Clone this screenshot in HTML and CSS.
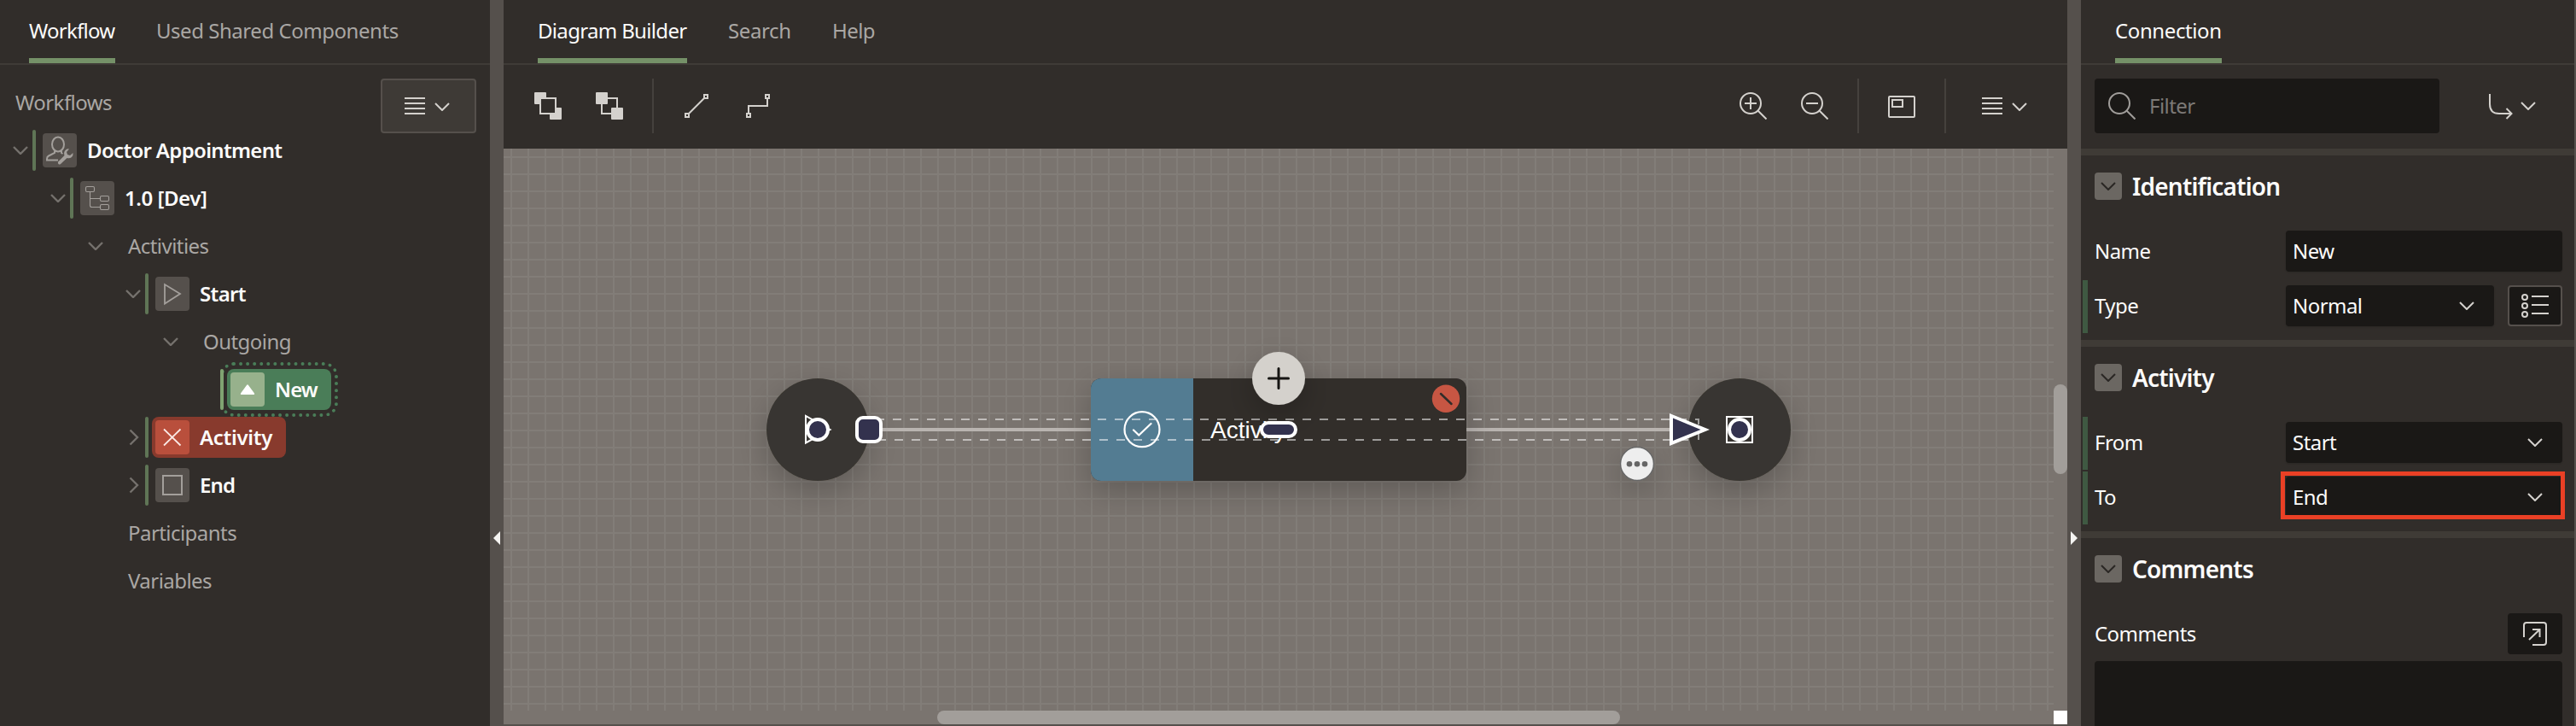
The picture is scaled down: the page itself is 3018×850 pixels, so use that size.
FILE: index.html
```html
<!DOCTYPE html>
<html lang="en">
<head>
<meta charset="utf-8">
<title>Workflow Designer</title>
<link rel="stylesheet" href="styles.css">
</head>
<body>
<svg class="sprite" aria-hidden="true">
  <symbol id="chev" viewBox="0 0 18 10"><path d="M1 1l8 8 8-8"/></symbol>
  <symbol id="chev-r" viewBox="0 0 12 20"><path d="M1.5 1.5l8.500 8.500-8.500 8.500"/></symbol>
  <symbol id="lines" viewBox="0 0 24 20"><path d="M0 1h24M0 7h24M0 13h24M0 19h24"/></symbol>
  <symbol id="mag" viewBox="0 0 32 32"><circle cx="13" cy="13" r="12"/><path d="M21.500 21.500L31.500 31.500"/></symbol>
</svg>
<div class="app">
  <aside class="panel left">
    <nav class="tabs">
      <span class="tab active t-workflow">Workflow</span>
      <span class="tab t-shared">Used Shared Components</span>
    </nav>
    <div class="tree-head">
      <span class="tree-title">Workflows</span>
      <button class="menu-btn"><svg class="ic i-lines"><use href="#lines"/></svg><svg class="ic i-chev"><use href="#chev"/></svg></button>
    </div>
    <ul class="tree">
      <li class="node l0"><span class="tw"><svg class="ic i-chev"><use href="#chev"/></svg></span><i class="bar"></i>
        <span class="pill"><span class="box"><svg class="ic" width="40" height="40" viewBox="0 0 40 40"><g stroke-width="2"><ellipse cx="18" cy="13" rx="7" ry="8.500"/><path d="M14 20.500v2.500l-7 3.500q-2 1-2 3.500v1.500h13M22 20.500v2.500l1.500 1"/></g><path class="solid" d="M18 33.500l7.500-7.500q-1.500-4.500 2-7 1.500-1 3.500-.5l-3 3.500 1 3 3 1 3.500-3q.5 3-1.500 5-2.500 2-5.500 1l-7.500 7q-1.500 1-2.500 0t-.5-2.500z"/></svg></span><b class="name n-doctor">Doctor Appointment</b></span></li>
      <li class="node l1"><span class="tw"><svg class="ic i-chev"><use href="#chev"/></svg></span><i class="bar"></i>
        <span class="pill"><span class="box"><svg class="ic" width="40" height="40" viewBox="0 0 40 40"><g stroke-width="1.100"><rect x="6.500" y="6.500" width="10" height="6" rx="1.500"/><rect x="23.500" y="17.500" width="10" height="6" rx="1.500"/><rect x="23.500" y="27.500" width="10" height="6" rx="1.500"/><path d="M11.500 12.500v16q0 2 2 2h10M11.500 20.500h12"/></g></svg></span><b class="name n-version">1.0 [Dev]</b></span></li>
      <li class="node l2"><span class="tw"><svg class="ic i-chev"><use href="#chev"/></svg></span><span class="group">Activities</span></li>
      <li class="node l3"><span class="tw"><svg class="ic i-chev"><use href="#chev"/></svg></span><i class="bar"></i>
        <span class="pill"><span class="box"><svg class="ic" width="40" height="40" viewBox="0 0 40 40"><path stroke-width="1.800" d="M11 9v22.500L29 20z"/></svg></span><b class="name n-start">Start</b></span></li>
      <li class="node l4"><span class="tw"><svg class="ic i-chev"><use href="#chev"/></svg></span><span class="group">Outgoing</span></li>
      <li class="node l5 selected"><span class="tw"></span><i class="bar"></i>
        <span class="pill"><span class="box"><svg class="ic" width="40" height="40" viewBox="0 0 40 40"><path class="solid" d="M19 15q1-1.500 2 0l7 9.500q.8 1.500-1 1.500H13q-1.800 0-1-1.500z"/></svg></span><b class="name">New</b></span></li>
      <li class="node l3 error"><span class="tw"><svg class="ic i-chev-r"><use href="#chev-r"/></svg></span><i class="bar"></i>
        <span class="pill"><span class="box"><svg class="ic" width="40" height="40" viewBox="0 0 40 40"><path stroke-width="1.800" d="M10 10.500l19.500 19M29.500 10.500L10 29.500"/></svg></span><b class="name n-activity">Activity</b></span></li>
      <li class="node l3"><span class="tw"><svg class="ic i-chev-r"><use href="#chev-r"/></svg></span><i class="bar"></i>
        <span class="pill"><span class="box"><svg class="ic" width="40" height="40" viewBox="0 0 40 40"><rect x="9" y="9" width="22" height="22" stroke-width="2"/></svg></span><b class="name">End</b></span></li>
      <li class="node l2"><span class="tw"></span><span class="group">Participants</span></li>
      <li class="node l2"><span class="tw"></span><span class="group">Variables</span></li>
    </ul>
  </aside>
  <div class="splitter"><svg width="8" height="16" viewBox="0 0 8 16"><path d="M8 0v16L0 8z"/></svg></div>

  <main class="center">
    <nav class="tabs">
      <span class="tab active t-builder">Diagram Builder</span>
      <span class="tab t-search">Search</span>
      <span class="tab t-help">Help</span>
    </nav>
    <div class="toolbar">
      <svg class="ic tool-front" width="32" height="32" viewBox="0 0 32 32"><path class="solid" d="M1 0h12q1 0 1 1v5H6v8H1q-1 0-1-1V1q0-1 1-1zM26 18h5q1 0 1 1v12q0 1-1 1H19q-1 0-1-1v-5h8z"/><rect x="7" y="7" width="18" height="18"/></svg>
      <svg class="ic tool-back" width="32" height="32" viewBox="0 0 32 32"><rect x="7" y="7" width="18" height="18"/><rect class="solid" width="14" height="14" rx="1"/><rect class="solid" x="18" y="18" width="14" height="14" rx="1"/></svg>
      <i class="rule"></i>
      <svg class="ic tool-line" width="28" height="28" viewBox="0 0 28 28"><rect x="1" y="23" width="4" height="4"/><rect x="23" y="1" width="4" height="4"/><path d="M4.500 23.500l19-19"/></svg>
      <svg class="ic tool-elbow" width="28" height="28" viewBox="0 0 28 28"><rect x="1" y="23" width="4" height="4"/><rect x="23" y="1" width="4" height="4"/><path d="M3 23V14h22V5"/></svg>
      <span class="grow"></span>
      <svg class="ic tool-zin" width="32" height="32" viewBox="0 0 32 32"><circle cx="13" cy="13" r="12"/><path d="M21.500 21.500l10 10M6 13h14M13 6v14"/></svg>
      <svg class="ic tool-zout" width="32" height="32" viewBox="0 0 32 32"><circle cx="13" cy="13" r="12"/><path d="M21.500 21.500l10 10M6 13h14"/></svg>
      <i class="rule"></i>
      <svg class="ic tool-over" width="32" height="26" viewBox="0 0 32 26"><rect x="1" y="1" width="30" height="24" rx="1"/><rect x="5" y="5" width="12" height="8"/></svg>
      <i class="rule"></i>
      <span class="tool-menu"><svg class="ic i-lines"><use href="#lines"/></svg><svg class="ic i-chev"><use href="#chev"/></svg></span>
    </div>
    <div class="canvas">
      <svg class="stage" width="1832" height="674" viewBox="590 174 1832 674">
        <defs>
          <pattern id="grid" x="598" y="183" width="20" height="20" patternUnits="userSpaceOnUse"><path class="grid-line" d="M0 0h20v2H2v18H0z"/></pattern>
          <filter id="shadow" x="-60%" y="-60%" width="220%" height="220%"><feDropShadow dx="0" dy="12" stdDeviation="18" flood-color="#000" flood-opacity=".22"/></filter>
          <filter id="shadow-wide" x="-20%" y="-60%" width="140%" height="220%"><feDropShadow dx="0" dy="12" stdDeviation="18" flood-color="#000" flood-opacity=".22"/></filter>
        </defs>
        <rect x="590" y="174" width="1816" height="658" fill="url(#grid)"/>
        <path class="wire" d="M1030 503H1960"/>
        <circle class="terminal" cx="958" cy="503" r="60" filter="url(#shadow)"/>
        <path class="outline" d="M944 487v31.500L972.500 503z"/>
        <circle class="terminal" cx="2038" cy="503" r="60" filter="url(#shadow)"/>
        <rect class="outline" x="2023" y="488" width="30" height="30"/>
        <g filter="url(#shadow-wide)">
          <rect class="card" x="1278" y="443" width="440" height="120" rx="12"/>
          <path class="card-side" d="M1290 443h108v120h-108a12 12 0 0 1-12-12v-96a12 12 0 0 1 12-12z"/>
        </g>
        <circle class="check" cx="1338" cy="502.700" r="20.500"/>
        <path class="check" d="M1328 503.500l6.300 6L1348.500 496" stroke-linecap="round"/>
        <text class="card-text" x="1418" y="513">Activity</text>
        <path class="dash" d="M1026 491H1990V515"/>
        <path class="dash" d="M1028 515H1984"/>
        <circle class="badge" cx="1694" cy="466.700" r="16.200"/>
        <path class="badge-line" d="M1688 461l12.500 12"/>
        <circle class="add" cx="1498" cy="443" r="31" filter="url(#shadow)"/>
        <path class="add-line" d="M1486.500 443h23M1498 431.500v23"/>
        <rect class="handle" x="1478" y="495" width="40" height="16" rx="8"/>
        <circle class="handle" cx="958" cy="503" r="12"/>
        <rect class="handle" x="1004" y="489" width="28" height="28" rx="7"/>
        <path class="arrow-out" d="M1956 484v38L2003 503z"/>
        <path class="arrow-in" d="M1960 489.500v26.500L1992.500 503z"/>
        <circle class="handle" cx="2038" cy="503" r="12"/>
        <circle class="more" cx="1918" cy="543" r="19.500" filter="url(#shadow)"/>
        <g class="more-dots"><circle cx="1909" cy="543.300" r="3.300"/><circle cx="1918" cy="543.300" r="3.300"/><circle cx="1927" cy="543.300" r="3.300"/></g>
      </svg>
      <i class="vthumb"></i><i class="hthumb"></i><i class="corner"></i>
    </div>
  </main>
  <div class="splitter"><svg width="8" height="16" viewBox="0 0 8 16"><path d="M0 0v16L8 8z"/></svg></div>

  <aside class="panel right">
    <nav class="tabs"><span class="tab active t-conn">Connection</span></nav>
    <div class="filter-row">
      <div class="filter"><svg class="ic" width="32" height="32"><use href="#mag"/></svg><span>Filter</span></div>
      <svg class="ic goto" width="28" height="30" viewBox="0 0 28 30"><path d="M1 0v12q0 11 11 11h15M20.500 17l6 6-6 6"/></svg>
      <svg class="ic i-chev"><use href="#chev"/></svg>
    </div>
    <section class="group-box">
      <h2><span class="toggle"><svg class="ic i-chev"><use href="#chev"/></svg></span>Identification</h2>
      <div class="field"><label>Name</label><div class="input"><span>New</span></div></div>
      <div class="field changed"><label>Type</label><div class="input select"><span>Normal</span><svg class="ic i-chev"><use href="#chev"/></svg></div>
        <button class="side-btn framed"><svg class="ic" width="32" height="28" viewBox="0 0 32 28"><circle cx="4" cy="4" r="3"/><circle cx="4" cy="14" r="3"/><circle cx="4" cy="24" r="3"/><path d="M12 3h20M12 13h20M12 23h20"/></svg></button></div>
    </section>
    <section class="group-box">
      <h2><span class="toggle"><svg class="ic i-chev"><use href="#chev"/></svg></span>Activity</h2>
      <div class="field changed"><label>From</label><div class="input select"><span>Start</span><svg class="ic i-chev"><use href="#chev"/></svg></div></div>
      <div class="field changed"><label>To</label><div class="input select marked"><span>End</span><svg class="ic i-chev"><use href="#chev"/></svg></div></div>
    </section>
    <section class="group-box last">
      <h2><span class="toggle"><svg class="ic i-chev"><use href="#chev"/></svg></span>Comments</h2>
      <div class="field"><label class="wide">Comments</label>
        <button class="side-btn"><svg class="ic" width="28" height="28" viewBox="0 0 28 28"><path d="M1 18V4q0-3 3-3h20q3 0 3 3v20q0 3-3 3H11M7 21L19.500 9M11 9h8.500v9"/></svg></button></div>
      <div class="textarea"></div>
    </section>
  </aside>
</div>
</body>
</html>
```
FILE: styles.css
```css
* { box-sizing: border-box; }
body { margin: 0; background: #312d2a; }
.sprite { position: absolute; width: 0; height: 0; }
.app {
  display: flex; width: 3018px; height: 850px; overflow: hidden;
  font-family: "Noto Sans", "Open Sans", sans-serif; font-size: 24px; letter-spacing: -.55px; color: #fcfbfa;
}
.ic { flex: none; display: block; fill: none; stroke: #d4d1cd; stroke-width: 2; }
.ic .solid { fill: #d4d1cd; stroke: none; }
.i-chev { width: 18px; height: 10px; }
.i-chev-r { width: 12px; height: 20px; margin-left: 2px; }
.i-lines { width: 24px; height: 20px; }
button { margin: 0; padding: 0; font: inherit; }

.panel, .center { display: flex; flex-direction: column; background: #312d2a; }
.left { width: 574px; }
.center { width: 1832px; }
.right { width: 580px; border-right: 2px solid #55504c; }
.splitter { width: 16px; background: #55504c; display: flex; justify-content: center; padding-top: 622px; }
.splitter path { fill: #f5f4f2; }

/* Tabs */
.tabs { flex: none; display: flex; gap: 48px; height: 76px; border-bottom: 2px solid #3f3b37; padding-left: 34px; }
.center .tabs, .right .tabs { padding-left: 40px; }
.tab { height: 74px; padding-top: 3px; line-height: 66px; border-bottom: 6px solid transparent; color: #aaa7a4; white-space: nowrap; }
.tab.active { color: #fcfbfa; border-bottom-color: #759168; }
.t-workflow { letter-spacing: -.75px; width: 101px; }
.t-shared { letter-spacing: -.46px; }
.t-builder { letter-spacing: -.67px; width: 175px; }
.t-search { width: 74px; letter-spacing: -.4px; }
.t-conn { letter-spacing: -.4px; width: 125px; }

/* Tree */
.tree-head { flex: none; display: flex; justify-content: space-between; height: 72px; padding: 16px 16px 0 18px; }
.tree-title { line-height: 56px; color: #aaa7a4; }
.menu-btn { width: 112px; height: 64px; padding-right: 3px; display: flex; align-items: center; justify-content: center; gap: 11px; background: #3e3a36; border: 2px solid #55504c; border-radius: 4px; }
.menu-btn .i-chev, .tool-menu .i-chev { margin-top: 2px; }
.tree { margin: 0; padding: 0; list-style: none; }
.node { display: flex; align-items: center; height: 56px; padding-left: 12px; }
.l1 { padding-left: 56px; }
.l2 { padding-left: 100px; }
.l3 { padding-left: 144px; }
.l4 { padding-left: 188px; }
.l5 { padding-left: 232px; }
.tw { width: 24px; display: flex; justify-content: center; }
.tw .ic { stroke: #75716d; stroke-width: 2.400; }
.bar { width: 4px; height: 48px; margin: 0 4px 0 2px; border-radius: 2px; background: #5f7556; }
.pill { display: flex; align-items: center; gap: 12px; height: 48px; padding: 4px 16px 4px 4px; border-radius: 8px; white-space: nowrap; }
.box { width: 40px; height: 40px; border-radius: 4px; background: #55504c; }
.box .ic { stroke: #a39f9b; }
.box .solid { fill: #a39f9b; }
.name { font-weight: 600; letter-spacing: -.9px; padding-bottom: 2px; }
.n-doctor { letter-spacing: -.68px; }
.n-version { letter-spacing: -.45px; }
.n-start { letter-spacing: -.65px; }
.n-activity { letter-spacing: -.3px; }
.group { padding: 0 0 2px 26px; color: #aaa7a4; }
.selected .bar { position: relative; z-index: 1; background: #7fa371; }
.selected .pill { background: #4a7d58; outline: 4px dotted #4a7d58; outline-offset: 4px; }
.selected .box { background: #97b18c; }
.selected .solid { fill: #fff; }
.error .pill { background: #883a2d; }
.error .box { background: #b94f3c; }
.error .box .ic { stroke: #fbeae6; }

/* Toolbar */
.toolbar { flex: none; display: flex; align-items: center; height: 98px; padding: 0 47px 2px 36px; }
.rule { width: 2px; height: 64px; background: #45413d; }
.tool-back { margin: 0 34px 0 40px; }
.tool-line { margin: 0 44px 0 36px; }
.grow { flex: 1; }
.tool-zin { margin-right: 40px; }
.tool-zout { margin-right: 34px; }
.tool-over { margin: 2px 34px 0; }
.tool-menu { display: flex; align-items: center; gap: 11px; margin-left: 42px; }

/* Canvas */
.canvas { position: relative; flex: 1; background: #7a746f; border-bottom: 2px solid #55504c; }
.stage { display: block; }
.vthumb, .hthumb, .corner { position: absolute; background: #a29e9a; border-radius: 8px; }
.vthumb { right: 0; top: 276px; width: 16px; height: 105px; }
.hthumb { left: 508px; bottom: 0; width: 800px; height: 16px; }
.corner { right: 0; bottom: 0; width: 16px; height: 16px; border-radius: 0; background: #fff; }
.grid-line { fill: #827d78; }
.wire { stroke: #b9b4b0; stroke-width: 4; }
.terminal { fill: #393630; }
.outline { fill: none; stroke: #fff; stroke-width: 2; }
.card { fill: #312d2a; }
.card-side { fill: #527c92; }
.check { fill: none; stroke: #fff; stroke-width: 2.200; }
.card-text { font: 28px "Liberation Sans", Arial, sans-serif; letter-spacing: 0; fill: #fff; }
.dash { fill: none; stroke: #fff; stroke-opacity: .53; stroke-width: 2; stroke-dasharray: 10 10; }
.badge { fill: #c75643; }
.badge-line { stroke: #312d2a; stroke-width: 2.500; stroke-linecap: round; }
.add { fill: #d4d1cc; }
.add-line { stroke: #161513; stroke-width: 3; stroke-linecap: round; }
.handle { fill: #33324e; stroke: #fff; stroke-width: 4; }
.arrow-out { fill: #fff; }
.arrow-in { fill: #33324e; }
.more { fill: #eee; stroke: #666; stroke-width: 1.500; }
.more-dots { fill: #666; }

/* Property editor */
.filter-row { flex: none; display: flex; align-items: center; height: 98px; padding: 0 0 2px 16px; }
.filter { width: 404px; height: 64px; display: flex; align-items: center; gap: 16px; padding-left: 16px; background: #1a1816; border-radius: 4px; color: #7c7976; }
.filter span { padding-bottom: 2px; }
.filter .ic { stroke: #a09d9a; }
.goto { margin: 1px 9px 0 58px; }
.group-box { flex: none; border-top: 8px solid #3f3b36; padding: 20px 14px 8px 16px; }
.group-box.last { flex: 1; display: flex; flex-direction: column; padding-bottom: 0; }
h2 { display: flex; align-items: center; gap: 12px; height: 32px; margin: 0 0 28px; font-size: 28px; font-weight: 600; letter-spacing: -.8px; }
.toggle { width: 32px; height: 32px; display: flex; align-items: center; justify-content: center; border-radius: 4px; background: #6b6762; }
.toggle .ic { stroke: #2a2724; }
.field { display: flex; align-items: center; height: 64px; flex: none; }
.field.changed { margin-left: -14px; padding-left: 14px; background: linear-gradient(#3f5942, #3f5942) 0 2px / 6px 62px no-repeat; }
label { width: 224px; padding-bottom: 2px; }
label.wide { flex: 1; }
.input { flex: 1; height: 48px; display: flex; align-items: center; justify-content: space-between; padding: 0 23px 0 8px; background: #1a1816; border-radius: 4px; box-shadow: 0 1px 2px rgba(0,0,0,.15); }
.input span { padding-bottom: 2px; }
.marked { position: relative; }
.marked::after { content: ""; position: absolute; inset: -6px -3px -2px -6px; border: 5px solid #ea4025; }
.side-btn { width: 64px; height: 48px; display: flex; align-items: center; justify-content: center; background: #1a1816; border: 0; border-radius: 4px; }
.framed { margin-left: 16px; border: 2px solid #55504c; }
.textarea { flex: 1; background: #1a1816; border-radius: 4px 4px 0 0; }
```
